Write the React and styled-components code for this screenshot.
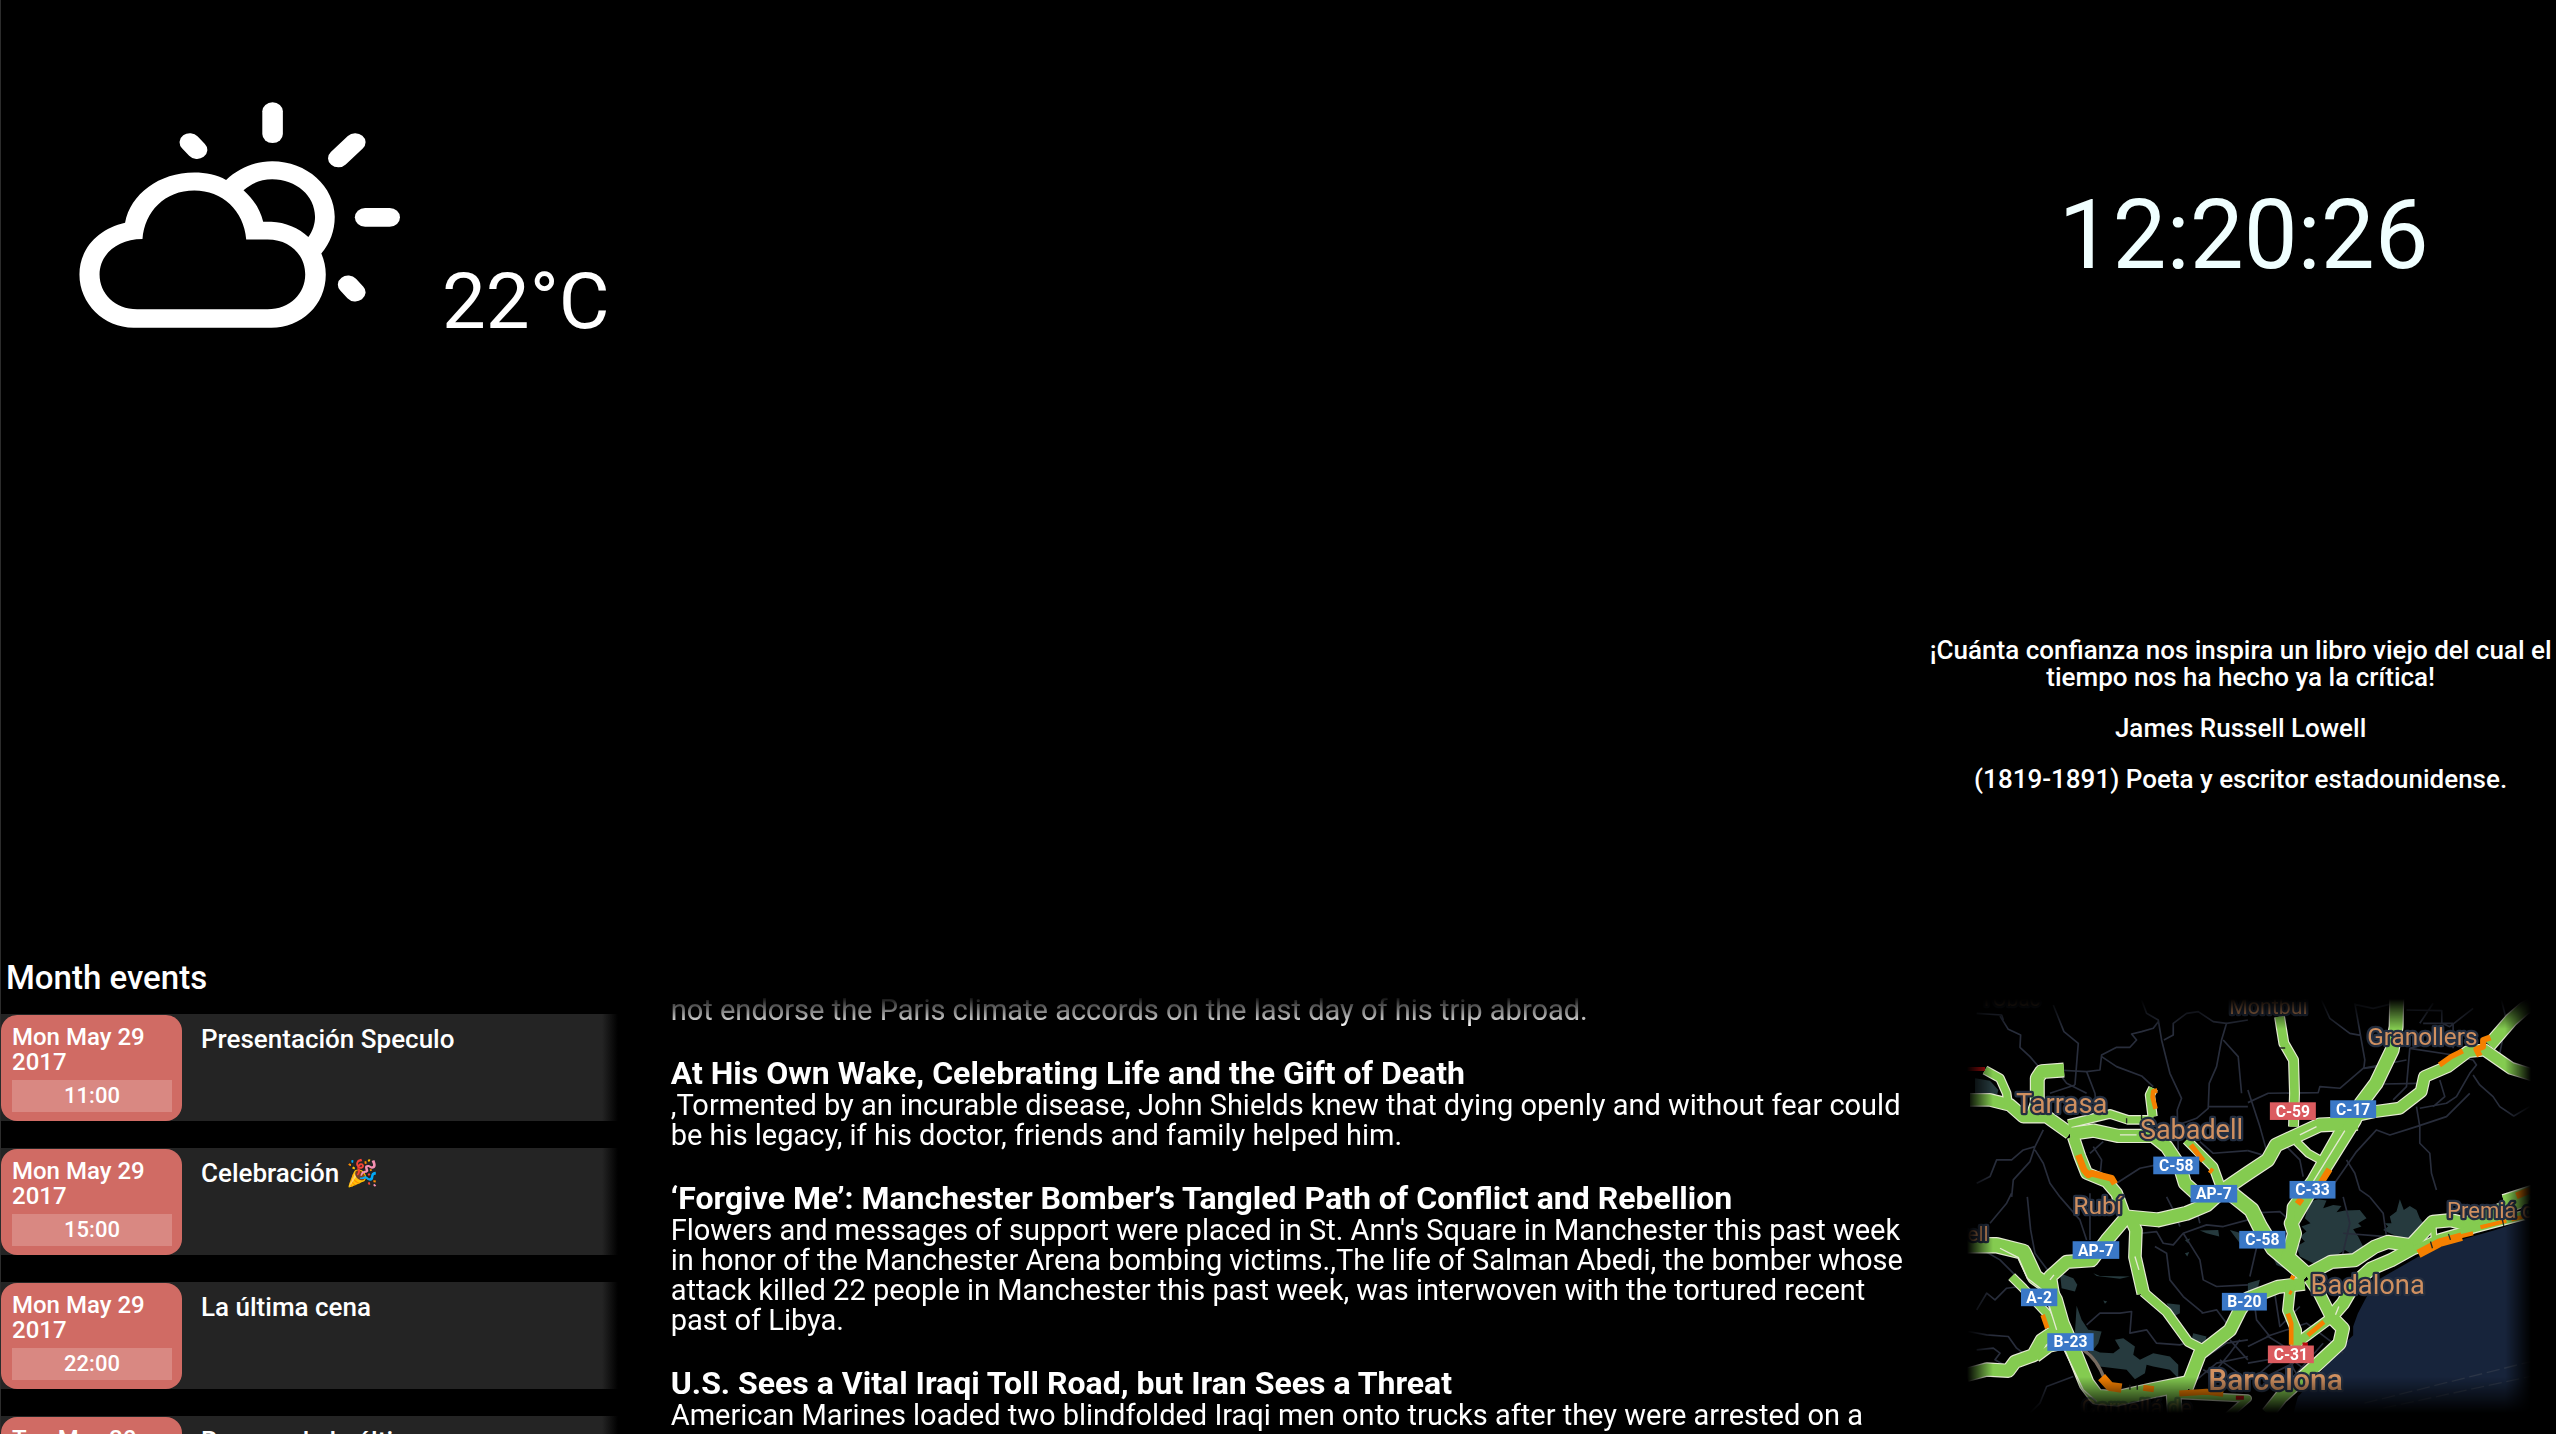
import React from "react";
import styled, { createGlobalStyle } from "styled-components";

const GlobalStyle = createGlobalStyle`
  * { box-sizing: border-box; }
  body { margin: 0; background: #000; color: #fff; font-family: Roboto, "Liberation Sans", sans-serif; }
  h1, h2, h3, p, ul, blockquote { margin: 0; padding: 0; font-weight: inherit; }
`;

const Mirror = styled.main`
  height: 100vh;
  overflow: hidden;
  display: grid;
  grid-template-columns: 1fr 2fr 1fr;
  grid-template-rows: repeat(3, minmax(0, 1fr));
  border-left: 1px solid #2c2c2c;
`;

const Weather = styled.section`
  display: flex;
  align-items: flex-start;
  gap: 42px;
  padding: 102px 0 0 78px;
`;

const Temperature = styled.p`
  padding-top: 155px;
  font-size: 78px;
  line-height: 90px;
`;

const Clock = styled.time`
  grid-column: 3;
  place-self: center;
  padding: 0 0 8px 14px;
  font-size: 96px;
  line-height: 112px;
  color: #f0ffff;
`;

const Quote = styled.blockquote`
  grid-column: 3;
  grid-row: 2;
  align-self: center;
  display: grid;
  gap: 24px;
  padding: 0 0 4px 8px;
  text-align: center;
  font-size: 26px;
  line-height: 27px;
  font-weight: 500;
`;

const Events = styled.section`
  grid-row: 3;
  min-height: 0;
`;

const EventsTitle = styled.h1`
  padding-left: 5px;
  font-size: 33px;
  line-height: 44px;
  font-weight: 500;
`;

const EventList = styled.ul`
  list-style: none;
  margin-top: 14px;
  margin-right: 22px;
  display: grid;
  gap: 27px;
`;

const EventRow = styled.li`
  display: flex;
  height: 107px;
  background: linear-gradient(to right, #242424 calc(100% - 16px), #000);
`;

const DateBadge = styled.div`
  width: 181px;
  margin-top: 1px;
  padding: 10px 10px 0 11px;
  border-radius: 16px;
  background: #d06b64;
  font-size: 24px;
  line-height: 25px;
  font-weight: 500;
`;

const Hour = styled.time`
  display: block;
  margin-top: 5px;
  background: #d98882;
  text-align: center;
  font-size: 22px;
  line-height: 32px;
`;

const EventName = styled.h2`
  padding: 9px 0 0 19px;
  font-size: 26px;
  line-height: 32px;
  font-weight: 500;
`;

const News = styled.section`
  grid-column: 2;
  grid-row: 3;
  min-height: 0;
  padding: 39px 8px 0 31px;
  display: flex;
  flex-direction: column;
  gap: 32px;
  mask-image: linear-gradient(to bottom, transparent 40px, #000 70px);
`;

const Story = styled.article`
  font-size: 29px;
  line-height: 30px;
`;

const Headline = styled.h2`
  padding-bottom: 1px;
  font-size: 32px;
  line-height: 32px;
  font-weight: 700;
`;

const Traffic = styled.section`
  grid-column: 3;
  grid-row: 3;
  min-height: 0;
  padding: 37px 21px 0 46px;
`;

const MapDrawing = styled.svg`
  display: block;
  width: 100%;
  mask-image: linear-gradient(to right, transparent 4px, #000 30px calc(100% - 30px), transparent calc(100% - 4px)),
    linear-gradient(to bottom, transparent 6px, #000 36px calc(100% - 44px), transparent calc(100% - 8px));
  mask-composite: intersect;
`;

const TownName = styled.text`
  font-family: Roboto, sans-serif;
  font-size: ${(p) => p.$size}px;
  font-weight: ${(p) => (p.$strong ? 500 : 400)};
  fill: #d09060;
  stroke: #232e40;
  stroke-width: 14px;
  stroke-linejoin: round;
  paint-order: stroke;
  opacity: ${(p) => (p.$faint ? 0.4 : 1)};
`;

const ShieldName = styled.text`
  font-family: Roboto, sans-serif;
  font-size: 47px;
  font-weight: 700;
  fill: #fff;
  text-anchor: middle;
`;

const events = [
  { date: "Mon May 29 2017", hour: "11:00", name: "Presentación Speculo" },
  { date: "Mon May 29 2017", hour: "15:00", name: "Celebración 🎉" },
  { date: "Mon May 29 2017", hour: "22:00", name: "La última cena" },
  { date: "Tue May 30 2017", hour: "10:00", name: "Repaso de la última" },
];

const stories = [
  { body: "not endorse the Paris climate accords on the last day of his trip abroad." },
  {
    title: "At His Own Wake, Celebrating Life and the Gift of Death",
    body: ",Tormented by an incurable disease, John Shields knew that dying openly and without fear could be his legacy, if his doctor, friends and family helped him.",
  },
  {
    title: "‘Forgive Me’: Manchester Bomber’s Tangled Path of Conflict and Rebellion",
    body: "Flowers and messages of support were placed in St. Ann's Square in Manchester this past week in honor of the Manchester Arena bombing victims.,The life of Salman Abedi, the bomber whose attack killed 22 people in Manchester this past week, was interwoven with the tortured recent past of Libya.",
  },
  {
    title: "U.S. Sees a Vital Iraqi Toll Road, but Iran Sees a Threat",
    body: "American Marines loaded two blindfolded Iraqi men onto trucks after they were arrested on a",
  },
];

const lanes = [
  "M180 168L205 208L242 225L240 262L270 290L300 325",
  "M110 160L185 165L190 180M340 135L372 215L415 250L405 375",
  "M655 185L640 205L605 215L575 222L590 240L570 262L530 262L485 285L480 330L440 335L350 330",
  "M485 290L530 320L605 348L640 380M440 335L465 400L470 450M405 375L330 400M350 330L380 370L440 400",
  "M605 120L620 160L655 180L665 240L690 340L725 415L712 450L715 570",
  "M672 240L700 225L700 190L740 160L775 155L820 185L860 190L845 240L830 320L808 370L805 445L770 475L700 500",
  "M860 190L924 180M850 240L895 290L905 400M805 440L924 440M924 428L985 400L1135 398L1140 380L1200 385L1270 325L1400 300",
  "M310 510L285 560L270 605L220 660L215 711M285 560L250 570L215 600L170 600L150 650L110 670M285 570L310 610L330 670L360 711",
  "M450 580L490 545M460 560L485 600L480 650M530 670L600 625L650 615M780 545L820 580L924 572",
  "M1145 120L1170 175L1230 220L1262 226M1245 130L1262 226L1275 300L1272 325L1310 320M1245 133L1300 145L1360 130",
  "M1400 150L1506 152L1506 190L1530 200L1600 145M1450 190L1540 190M1480 130L1440 190M1540 190L1540 265M1510 240L1410 265L1400 380L1360 420",
  "M1410 265L1540 285L1600 300L1610 315L1590 340L1550 410L1520 430L1440 445M1440 370L1330 372M1500 360L1515 410L1480 440",
  "M1600 345L1620 375L1660 410L1680 440L1722 468L1770 440M1685 120L1700 180L1680 280L1710 330",
  "M1430 440L1440 500L1440 550L1470 580L1475 640L1490 690M1590 400L1520 470L1430 500L1350 525L1310 510L1250 575L1170 690",
  "M1220 600L1245 640L1260 690L1290 711M1040 560L1080 600L1090 650M924 390L960 500L985 590L924 572",
  "M215 700L200 730L150 790M262 711L272 810L285 880L330 940M360 711L420 780L440 840M450 700L450 840M110 860L180 900L230 950",
  "M110 1050L140 1000L165 1020L200 985L240 980M85 1115L140 1125L205 1130L230 1165L250 1180M110 1170L160 1165L180 1180L165 1200L200 1220",
  "M440 1095L480 1060L540 1060L575 1055L570 1120L620 1110L650 1150L720 1155L770 1140M400 1250L320 1280L300 1330L260 1370",
  "M605 820L650 815L670 850L700 855L730 820L800 795L850 800L924 780M680 711L700 750L720 800M760 711L780 790",
  "M645 860L680 880L690 960L730 1010L790 1060M730 820L780 900L790 960L830 980L924 975M785 1060L830 1050L860 1090",
  "M800 1190L860 1150L924 1140M830 1230L870 1180L900 1140M770 1260L830 1210L924 1190M840 1200L924 1260M790 1230L860 1270M870 1140L924 1200",
  "M924 1160L985 1130L1050 1170L1060 1230M940 1000L950 1080L990 1130M1000 970L1020 1100L1080 1040M1060 1050L1060 1210L980 1250",
  "M924 1210L1040 1190L1080 1260M980 1130L1100 1090L1180 1150L1210 1180M960 1240L1030 1180L1110 1240M1000 1320L1150 1150",
  "M924 760L1020 755L1070 800M940 760L960 820L930 950M1210 711L1230 790L1200 920M1290 711L1330 760L1340 830L1210 820",
];

const greens = [
  [34, "M90 420L150 420L210 435L250 470L320 470L390 520"],
  [22, "M135 330L180 355L200 400L205 435"],
  [38, "M372 330L305 335L292 355L292 430L280 465"],
  [22, "M385 492L510 462L565 480L640 480"],
  [36, "M390 522L460 512L535 528L640 528L680 560L720 620L735 670L790 720"],
  [32, "M400 530L420 590L440 640L500 665L530 700L550 755L560 775"],
  [24, "M640 385L630 405L638 470"],
  [24, "M740 540L820 620L840 675"],
  [38, "M560 771L655 780L740 760L800 735L850 690L924 640L984 600L1009 555L1139 495L1254 490"],
  [42, "M860 690L935 750L960 800L1000 865L1100 950"],
  [26, "M1019 170L1032 250L1061 300L1064 400L1061 500"],
  [20, "M1070 545L1105 580L1145 602"],
  [38, "M1371 105L1369 200L1357 270L1309 370L1264 430L1244 480L1144 640L1100 711L1054 790L1064 821L1044 891L1099 941"],
  [22, "M1199 510L1114 660L1055 740L1050 800"],
  [32, "M1234 470L1304 455L1379 445L1444 395L1454 350L1524 320L1584 275L1634 270L1714 325L1794 350"],
  [36, "M1649 255L1714 180L1754 145L1804 120"],
  [20, "M1690 716L1800 680"],
  [42, "M80 856L170 856L250 876L285 951L320 976L345 1021L365 1091L400 1171L440 1271L470 1311L530 1316L640 1291L740 1271"],
  [22, "M215 950L250 985L320 1060L360 1150"],
  [36, "M560 771L500 841L455 901L380 906L330 951L340 1011"],
  [34, "M570 771L588 811L585 891L610 1001"],
  [24, "M610 996L680 1056L745 1146L785 1166"],
  [36, "M80 1245L140 1229L205 1233L225 1206L280 1186L305 1141L350 1111"],
  [20, "M290 1195L330 1165L400 1150"],
  [36, "M740 1285L780 1181L870 1111L900 1051L924 1016L1014 981L1094 971"],
  [36, "M1099 946L1174 906L1244 901L1304 861L1344 846L1414 856L1479 786L1534 781L1574 791L1624 776L1724 731L1774 711"],
  [36, "M1424 862L1354 901L1294 926L1244 971L1209 1031L1174 1071L1209 1106L1199 1151L1124 1221L1024 1311L984 1361"],
  [32, "M1109 956L1139 1001L1174 1071"],
  [28, "M1052 975L1044 1051L1069 1111L1069 1161"],
  [26, "M1069 1151L1164 1081"],
  [40, "M700 1290L705 1361"],
  [18, "M700 1305L924 1316L850 1381"],
  [24, "M1424 870L1500 835L1604 805L1774 760"],
  [14, "M1484 850L1480 800"],
];

const jams = [
  [20, "M415 585L432 630L445 645L455 640L515 655L525 672"],
  [14, "M652 392L640 394L638 412L647 447"],
  [16, "M753 555L790 603M809 629L818 636"],
  [16, "M1499 315L1534 290L1569 273"],
  [18, "M1652 232L1630 240L1630 260L1610 268L1620 288"],
  [20, "M1169 628L1144 668M1085 716L1073 732"],
  [20, "M1730 708L1774 690"],
  [14, "M308 1065L322 1105"],
  [28, "M485 1252L510 1280L545 1285"],
  [18, "M610 1284L642 1288M718 1301L800 1296L850 1302"],
  [14, "M1044 1061L1054 1091L1054 1155M1104 1126L1152 1086"],
  [26, "M1436 882L1500 848L1566 830"],
  [12, "M1560 830L1600 820M1622 802L1700 783M1715 779L1774 765M1052 950L1064 956M1048 996L1056 1000"],
];

const towns = [
  { x: 132, y: 138, size: 62, name: "l'Obac", faint: true },
  { x: 228, y: 458, size: 82, name: "Tarrasa" },
  { x: 600, y: 536, size: 81, name: "Sabadell" },
  { x: 868, y: 163, size: 64, name: "Montbui" },
  { x: 1282, y: 254, size: 73, name: "Granollers" },
  { x: 400, y: 763, size: 74, name: "Rubí" },
  { x: 62, y: 843, size: 62, name: "rell" },
  { x: 1522, y: 773, size: 66, name: "Premiá de" },
  { x: 1112, y: 1001, size: 82, name: "Badalona" },
  { x: 805, y: 1291, size: 90, name: "Barcelona", strong: true },
  { x: 425, y: 1366, size: 66, name: "Cornellá de", faint: true },
];

const shields = [
  [640, 590, 138, "C-58"],
  [752, 675, 140, "AP-7"],
  [990, 427, 138, "C-59", true],
  [1171, 421, 138, "C-17"],
  [1049, 663, 138, "C-33"],
  [398, 844, 140, "AP-7"],
  [243, 986, 109, "A-2"],
  [322, 1120, 139, "B-23"],
  [898, 813, 139, "C-58"],
  [846, 999, 135, "B-20"],
  [984, 1157, 138, "C-31", true],
];

const parks = [
  "M105 355L150 362L175 390L172 402L105 402Z",
  "M360 940L400 955L412 975L405 995L365 985Z",
  "M410 1038L425 1080L445 1110L485 1115L475 1150L460 1170L480 1178L520 1180L540 1165L525 1140L550 1135L585 1160L580 1185L600 1200L640 1180L690 1190L715 1215L715 1255L690 1230L640 1220L620 1215L615 1240L585 1258L560 1230L480 1220L440 1165L405 1120Z",
  "M735 840L750 836L745 850ZM735 880L748 876L742 890ZM780 812L835 810L838 830L800 820ZM680 1030L720 1035L720 1060L700 1070ZM760 1120L800 1130L795 1150L755 1140ZM490 1022L502 1025L495 1032ZM460 940L480 948L570 950L540 957L470 948ZM870 810L905 820L900 850Z",
  "M1110 725L1135 718L1160 722L1150 745L1180 735L1205 738L1190 757L1215 752L1260 750L1280 775L1255 790L1265 800L1240 808L1255 830L1270 860L1240 885L1215 870L1200 880L1170 900L1120 910L1080 890L1070 860L1095 845L1080 830L1100 815L1085 800L1112 790L1095 775Z",
  "M1380 718L1392 750L1410 738L1430 750L1440 775L1455 795L1450 830L1425 842L1400 840L1350 820L1330 810L1345 800L1335 790L1355 790L1350 770L1370 755Z",
  "M990 870L1030 890L1045 930L1010 915ZM924 970L960 960L950 1000L924 1000Z",
];

function WeatherIcon() {
  return (
    <svg width="321" height="226" viewBox="178 127 718 676" preserveAspectRatio="none" fill="#fff" role="img" aria-label="Partly cloudy">
      <path fillRule="evenodd" d="M300 802H608C675 802 730 735 730 643C730 620 726 598 720 580C740 548 750 512 750 470C750 380 688 304 610 304C570 304 535 325 507 360C486 345 462 338 436 338C357 338 293 403 281 488C222 505 179 565 179 643C179 730 233 802 300 802ZM320 537C325 455 370 392 436 392C498 392 547 452 552 538H600C650 538 684 585 684 643C684 700 650 747 600 747H308C258 747 224 700 224 643C224 585 262 537 320 537ZM691 531C701 513 706 490 706 470C706 408 664 358 610 358C585 358 564 370 546 391C568 417 583 448 590 485H608C640 487 669 503 691 531Z" />
      <rect x="588" y="128" width="46" height="122" rx="23" ry="27" />
      <rect x="795" y="444" width="101" height="56" rx="23" ry="28" />
      <g transform="scale(1 1.19)" stroke="#fff" strokeWidth="46" strokeLinecap="round">
        <path d="M796 208L758 248M426 208L442 227M780 566L796 585" />
      </g>
    </svg>
  );
}

function TrafficMap() {
  return (
    <MapDrawing viewBox="69 99 1716 1284" role="img" aria-label="Traffic around Barcelona">
      <g fill="#263a3e">{parks.map((d) => <path key={d} d={d} />)}</g>
      <path fill="#17243b" d="M1304 966L1434 891L1524 851L1664 811L1800 765L1800 1400L1050 1400L1074 1311L1139 1241L1194 1171L1240 1126L1240 1100L1254 1061Z" />
      <path d="M1274 1330L1794 1200M1330 1345L1794 1245" stroke="#2b3547" strokeWidth="4" strokeDasharray="40 14" />
      <g fill="none" stroke="#282d3b" strokeWidth="5" strokeLinejoin="round">{lanes.map((d) => <path key={d} d={d} />)}</g>
      <path d="M430 1170Q470 1195 495 1260" fill="none" stroke="#776b60" strokeWidth="10" />
      <g fill="none" stroke="#e4ead2" strokeLinejoin="round">{greens.map(([w, d]) => <path key={d} d={d} strokeWidth={w + 7} />)}</g>
      <g fill="none" stroke="#84cb50" strokeLinejoin="round">{greens.map(([w, d]) => <path key={d} d={d} strokeWidth={w} />)}</g>
      <path d="M1215 512L1120 665M180 865L235 893L262 955L320 1000M325 1030L350 1110M370 1165L430 1290L470 1325M540 525H590M1080 525L1130 500M585 890L597 930M330 960L342 945M1187 1065L1197 1040" fill="none" stroke="#e4ead2" strokeWidth="4" />
      <g fill="none" stroke="#f58000" strokeLinejoin="round">{jams.map(([w, d]) => <path key={d} d={d} strokeWidth={w} />)}</g>
      <path d="M80 327H135M888 1314H912M1088 1154H1104" stroke="#b80d0d" strokeWidth="12" />
      <path d="M560 475V490M605 465V478M570 1275V1290M592 1275V1290M1472 845L1478 865M1526 822L1532 840M1688 780L1692 798M1020 264H1036" stroke="#242a22" strokeWidth="4" />
      {towns.map((t) => (
        <TownName key={t.name} x={t.x} y={t.y} $size={t.size} $strong={t.strong} $faint={t.faint}>{t.name}</TownName>
      ))}
      {shields.map(([x, y, w, name, red]) => (
        <g key={`${x}-${y}`}>
          <rect x={x} y={y} width={w} height="53" fill={red ? "#db5b5f" : "#3a78c7"} />
          <ShieldName x={x + w / 2} y={y + 43}>{name}</ShieldName>
        </g>
      ))}
    </MapDrawing>
  );
}

export default function App() {
  return (
    <>
      <GlobalStyle />
      <Mirror>
        <Weather>
          <WeatherIcon />
          <Temperature>22°C</Temperature>
        </Weather>
        <Clock>12:20:26</Clock>
        <Quote>
          <p>¡Cuánta confianza nos inspira un libro viejo del cual el tiempo nos ha hecho ya la crítica!</p>
          <p>James Russell Lowell</p>
          <p>(1819-1891) Poeta y escritor estadounidense.</p>
        </Quote>
        <Events>
          <EventsTitle>Month events</EventsTitle>
          <EventList>
            {events.map((e) => (
              <EventRow key={e.name}>
                <DateBadge>
                  {e.date}
                  <Hour>{e.hour}</Hour>
                </DateBadge>
                <EventName>{e.name}</EventName>
              </EventRow>
            ))}
          </EventList>
        </Events>
        <News>
          {stories.map((s) => (
            <Story key={s.body}>
              {s.title && <Headline>{s.title}</Headline>}
              <p>{s.body}</p>
            </Story>
          ))}
        </News>
        <Traffic>
          <TrafficMap />
        </Traffic>
      </Mirror>
    </>
  );
}
